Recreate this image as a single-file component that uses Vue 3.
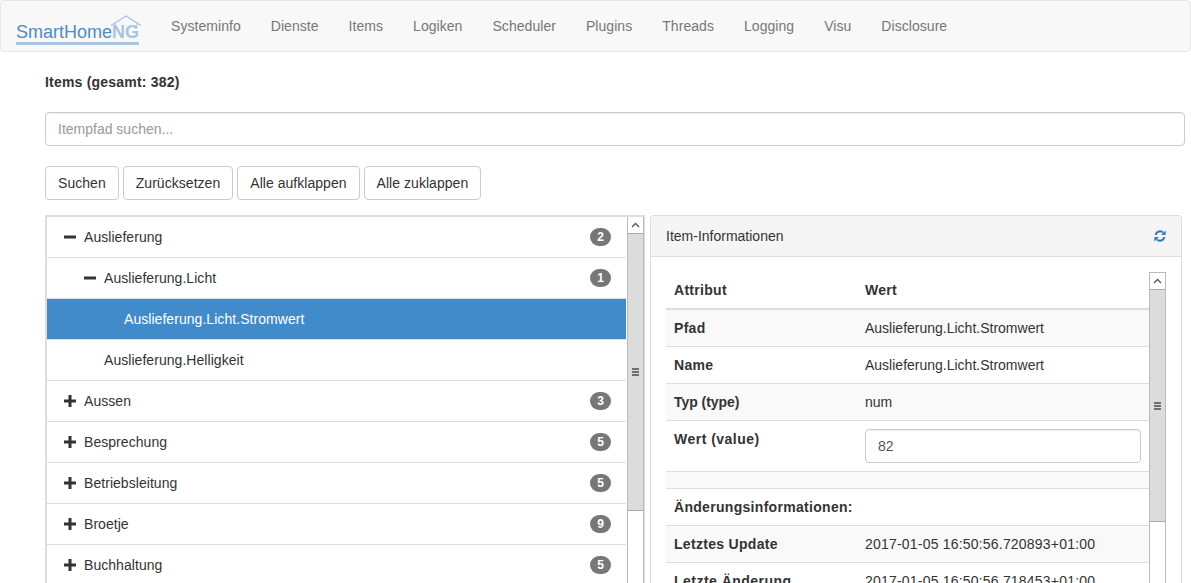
<script setup>
const nav = ['Systeminfo', 'Dienste', 'Items', 'Logiken', 'Scheduler', 'Plugins', 'Threads', 'Logging', 'Visu', 'Disclosure']
const tree = [
  { label: 'Auslieferung', level: 1, icon: 'minus', badge: 2 },
  { label: 'Auslieferung.Licht', level: 2, icon: 'minus', badge: 1 },
  { label: 'Auslieferung.Licht.Stromwert', level: 3, active: true },
  { label: 'Auslieferung.Helligkeit', level: 2 },
  { label: 'Aussen', level: 1, icon: 'plus', badge: 3 },
  { label: 'Besprechung', level: 1, icon: 'plus', badge: 5 },
  { label: 'Betriebsleitung', level: 1, icon: 'plus', badge: 5 },
  { label: 'Broetje', level: 1, icon: 'plus', badge: 9 },
  { label: 'Buchhaltung', level: 1, icon: 'plus', badge: 5 },
  { label: 'Dach', level: 1, icon: 'plus', badge: 4 }
]
</script>

<template>
  <div class="page">
    <nav class="navbar">
      <a class="logo">
        <svg class="roof" viewBox="0 0 32 12" width="32" height="12">
          <path d="M1 10.5 L16 1 L31 10.5" fill="none" stroke="#a9c4e0" stroke-width="1.4" />
          <path d="M5 11.5 V8.5 M27 11.5 V8.5" stroke="#a9c4e0" stroke-width="1" />
        </svg>
        <span class="logo-a">SmartHome</span><span class="logo-b">NG</span>
      </a>
      <ul class="nav">
        <li v-for="n in nav" :key="n">{{ n }}</li>
      </ul>
    </nav>

    <main class="content">
      <h1 class="title">Items (gesamt: 382)</h1>
      <input class="search" type="text" placeholder="Itempfad suchen..." />
      <div class="buttons">
        <button>Suchen</button>
        <button>Zurücksetzen</button>
        <button>Alle aufklappen</button>
        <button>Alle zuklappen</button>
      </div>

      <div class="columns">
        <div class="tree-wrap">
          <ul class="tree">
            <li v-for="t in tree" :key="t.label" class="row" :class="['lvl' + t.level, { active: t.active }]">
              <svg v-if="t.icon" class="sign" viewBox="0 0 12 12" width="12" height="12">
                <rect x="0" y="4.5" width="12" height="3" fill="#333" />
                <rect v-if="t.icon === 'plus'" x="4.5" y="0" width="3" height="12" fill="#333" />
              </svg>
              <span v-else class="sign"></span>
              <span class="label">{{ t.label }}</span>
              <span v-if="t.badge" class="badge">{{ t.badge }}</span>
            </li>
          </ul>
          <div class="scrollbar">
            <div class="arrow"><svg viewBox="0 0 9 6" width="9" height="6"><path d="M1 5 L4.5 1.5 L8 5" fill="none" stroke="#555" stroke-width="1.3" /></svg></div>
            <div class="thumb tree-thumb"><span class="grip"></span></div>
          </div>
        </div>

        <section class="panel">
          <header class="panel-head">
            <span>Item-Informationen</span>
            <svg class="refresh" viewBox="0 0 12 12" width="12" height="12">
              <path d="M1.6 5 A4.6 4.6 0 0 1 9.3 2.6" fill="none" stroke="#337ab7" stroke-width="2" />
              <path d="M11.6 0.6 V5 H7.2 Z" fill="#337ab7" />
              <path d="M10.4 7 A4.6 4.6 0 0 1 2.7 9.4" fill="none" stroke="#337ab7" stroke-width="2" />
              <path d="M0.4 11.4 V7 H4.8 Z" fill="#337ab7" />
            </svg>
          </header>
          <div class="panel-body">
            <table class="info">
              <thead>
                <tr><th class="c1">Attribut</th><th>Wert</th></tr>
              </thead>
              <tbody>
                <tr><th>Pfad</th><td>Auslieferung.Licht.Stromwert</td></tr>
                <tr><th>Name</th><td>Auslieferung.Licht.Stromwert</td></tr>
                <tr><th class="tight">Typ (type)</th><td>num</td></tr>
                <tr class="plain"><th class="wide">Wert (value)</th><td><input class="value" type="text" value="82" /></td></tr>
                <tr class="spacer"><td colspan="2"></td></tr>
                <tr class="plain"><th colspan="2">Änderungsinformationen:</th></tr>
                <tr><th>Letztes Update</th><td class="stamp">2017-01-05 16:50:56.720893+01:00</td></tr>
                <tr class="plain"><th class="wide">Letzte Änderung</th><td class="stamp">2017-01-05 16:50:56.718453+01:00</td></tr>
              </tbody>
            </table>
            <div class="scrollbar info-bar">
              <div class="arrow"><svg viewBox="0 0 9 6" width="9" height="6"><path d="M1 5 L4.5 1.5 L8 5" fill="none" stroke="#555" stroke-width="1.3" /></svg></div>
              <div class="thumb info-thumb"><span class="grip"></span></div>
            </div>
          </div>
        </section>
      </div>
    </main>
  </div>
</template>

<style>
html, body { margin: 0; background: #fff; overflow: hidden; }
</style>

<style scoped>
.page {
  height: 583px;
  overflow: hidden;
  font-family: "Liberation Sans", Arial, sans-serif;
  font-size: 14px;
  line-height: 20px;
  color: #333;
}
.navbar {
  display: flex;
  height: 50px;
  background: #f8f8f8;
  border: 1px solid #e7e7e7;
  border-radius: 4px;
}
.logo {
  position: relative;
  width: 155px;
  box-sizing: border-box;
  padding: 19px 0 0 15px;
  font-size: 18px;
  line-height: 24px;
  white-space: nowrap;
}
.logo::after {
  content: "";
  position: absolute;
  left: 15px;
  top: 41px;
  width: 123px;
  height: 3px;
  background: #a9c4e0;
}
.roof { position: absolute; left: 109px; top: 14px; }
.logo-a { color: #4f8bc4; }
.logo-b { color: #a9c4e0; font-weight: 700; }
.nav {
  display: flex;
  margin: 0;
  padding: 0;
  list-style: none;
  color: #777;
  letter-spacing: .05px;
}
.nav li { padding: 15px; }
.content { padding: 0 6px 0 45px; }
.title {
  margin: 20px 0 0;
  font-size: 14px;
  line-height: 20px;
  font-weight: 700;
  letter-spacing: .2px;
}
.search {
  display: block;
  box-sizing: border-box;
  width: 100%;
  height: 34px;
  margin-top: 20px;
  padding: 6px 12px;
  font: inherit;
  color: #555;
  border: 1px solid #ccc;
  border-radius: 4px;
  box-shadow: inset 0 1px 1px rgba(0, 0, 0, .075);
  outline: none;
}
.search::placeholder { color: #999; opacity: 1; }
.buttons { display: flex; gap: 4px; margin-top: 20px; }
button {
  height: 34px;
  padding: 6px 12px;
  font: inherit;
  letter-spacing: .04px;
  color: #333;
  background: #fff;
  border: 1px solid #ccc;
  border-radius: 4px;
}
.columns { display: flex; margin-top: 15px; align-items: flex-start; }
.tree-wrap {
  display: flex;
  width: 600px;
  box-sizing: border-box;
  border: solid #ddd;
  border-width: 2px 1px 0 2px;
}
.tree {
  flex: 1;
  margin: 0;
  padding: 0 1px 0 0;
  list-style: none;
  letter-spacing: .05px;
}
.row {
  display: flex;
  align-items: center;
  box-sizing: border-box;
  height: 41px;
  padding-right: 15px;
  border-bottom: 1px solid #ddd;
  background: #fff;
}
.row.active { background: #428bca; color: #fff; }
.lvl1 { padding-left: 17px; }
.lvl2 { padding-left: 37px; }
.lvl3 { padding-left: 57px; }
.sign { display: block; flex: none; width: 12px; height: 12px; margin-right: 8px; }
.label { flex: 1; }
.badge {
  min-width: 7px;
  padding: 3px 7px;
  font-size: 12px;
  line-height: 12px;
  font-weight: 700;
  color: #fff;
  text-align: center;
  background: #777;
  border-radius: 10px;
}
.scrollbar {
  flex: none;
  box-sizing: border-box;
  width: 17px;
  background: #fff;
  border-left: 1px solid #bbb;
  border-right: 1px solid #bbb;
}
.arrow {
  display: flex;
  align-items: center;
  justify-content: center;
  height: 16px;
  background: #fff;
}
.thumb {
  display: flex;
  align-items: center;
  justify-content: center;
  box-sizing: border-box;
  background: #dcdcdc;
  border-top: 1px solid #aaa;
  border-bottom: 1px solid #aaa;
}
.grip {
  display: block;
  width: 7px;
  height: 8px;
  background: repeating-linear-gradient(#707070 0 2px, transparent 2px 3px);
}
.tree-thumb { height: 278px; }
.info-thumb { height: 233px; }
.panel {
  flex: none;
  width: 532px;
  margin-left: 5px;
  box-sizing: border-box;
  background: #fff;
  border: 1px solid #ddd;
  border-radius: 4px;
  box-shadow: 0 1px 1px rgba(0, 0, 0, .05);
  overflow: hidden;
}
.panel-head {
  display: flex;
  align-items: center;
  justify-content: space-between;
  height: 41px;
  box-sizing: border-box;
  padding: 0 15px;
  background: #f5f5f5;
  border-bottom: 1px solid #ddd;
}
.panel-body { display: flex; padding: 15px 15px 0; }
.info {
  flex: 1;
  align-self: flex-start;
  border-collapse: separate;
  border-spacing: 0;
  table-layout: fixed;
  width: 483px;
}
.info th, .info td {
  padding: 8px;
  text-align: left;
  vertical-align: top;
  line-height: 20px;
  border-bottom: 1px solid #ddd;
}
.info th { letter-spacing: .3px; }
.info .tight { letter-spacing: -.05px; }
.info .wide { letter-spacing: .48px; }
.info .stamp { letter-spacing: .2px; }
.info thead th { border-bottom-width: 2px; }
.info .c1 { width: 175px; }
.info tbody tr:nth-child(odd) th,
.info tbody tr:nth-child(odd) td { background: #f9f9f9; }
.info tr.plain th, .info tr.plain td { background: #fff; }
.info tr.spacer td { height: 16px; padding: 0; background: #f9f9f9; }
.value {
  display: block;
  box-sizing: border-box;
  width: 276px;
  height: 34px;
  padding: 6px 12px;
  font: inherit;
  letter-spacing: normal;
  color: #555;
  border: 1px solid #ccc;
  border-radius: 4px;
  box-shadow: inset 0 1px 1px rgba(0, 0, 0, .075);
  outline: none;
}
.info-bar { border-top: 1px solid #bbb; }
</style>
